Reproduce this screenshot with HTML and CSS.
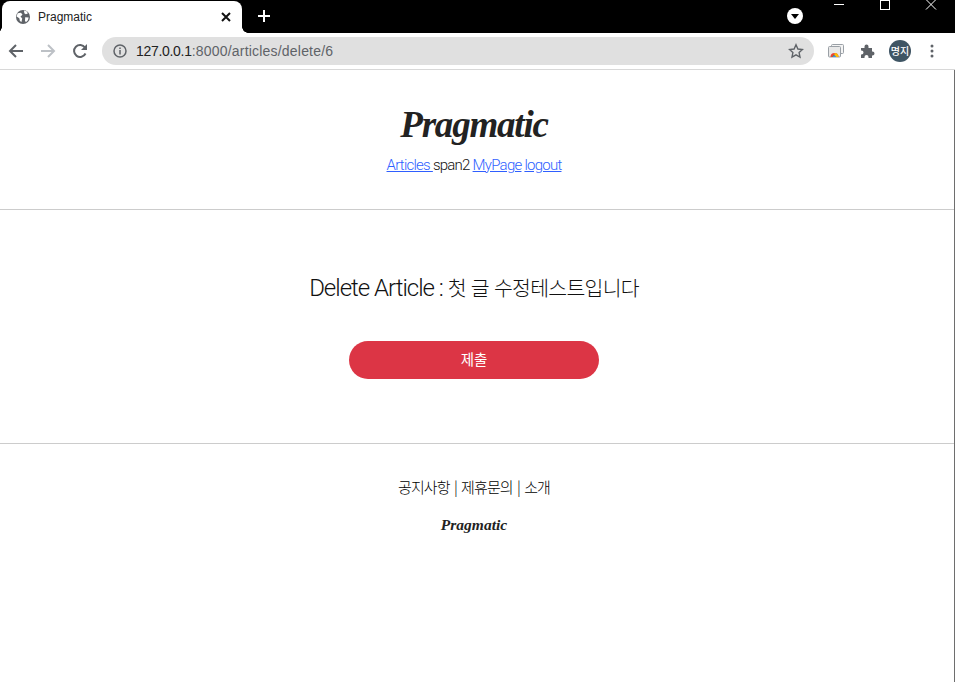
FILE: index.html
```html
<!DOCTYPE html>
<html lang="ko">
<head>
  <meta charset="UTF-8">
  <title>Pragmatic</title>
  <link rel="stylesheet" href="styles.css">
</head>
<body>
  <div class="tabstrip">
    <div class="tab">
      <svg class="globe" width="16" height="16" viewBox="0 0 16 16"><circle cx="8" cy="8" r="7" fill="#5f6368"/><path d="M2.600 4.200L6 3.800l1.500 2L5.500 7.600l1.700 2-.7 3.400-1.600-1-.6-2.700L1.600 7.500zM9 1.600l3 1 .8 1.800-2 .8L9.300 4.300zM10.200 8.200l3.500.3-.8 2.800-2 2-.9-1.500z" fill="#fff"/></svg>
      <span class="tab-title">Pragmatic</span>
      <svg class="tab-close" width="10" height="10" viewBox="0 0 10 10"><path d="M1 1l8 8M9 1l-8 8" stroke="#111" stroke-width="2"/></svg>
    </div>
    <svg class="new-tab" width="14" height="14" viewBox="0 0 14 14"><path d="M7 1v12M1 7h12" stroke="#fff" stroke-width="2"/></svg>
    <div class="strip-right">
      <div class="profile-dot"><svg width="10" height="7" viewBox="0 0 10 7"><path d="M1 1h8L5 6z" fill="#000"/></svg></div>
      <div class="win-btns">
        <svg width="12" height="12" viewBox="0 0 12 12"><path d="M1 5.500h10" stroke="#fff"/></svg>
        <svg width="12" height="12" viewBox="0 0 12 12"><rect x="1.500" y="1.500" width="9" height="9" fill="none" stroke="#fff"/></svg>
        <svg width="12" height="12" viewBox="0 0 12 12"><path d="M1 .5l10 10M11 .5l-10 10" stroke="#fff"/></svg>
      </div>
    </div>
  </div>

  <div class="toolbar">
    <svg class="nav" width="16" height="16" viewBox="0 0 16 16"><path d="M15 8H2M8 2L2 8l6 6" fill="none" stroke="#5f6368" stroke-width="2"/></svg>
    <svg class="nav" width="16" height="16" viewBox="0 0 16 16"><path d="M1 8h13M8 2l6 6-6 6" fill="none" stroke="#bdc1c6" stroke-width="2"/></svg>
    <svg class="nav" width="16" height="16" viewBox="0 0 16 16"><path d="M13.500 10.500A6 6 0 1 1 13 4.500" fill="none" stroke="#5f6368" stroke-width="2"/><path d="M15 1v6H9z" fill="#5f6368"/></svg>
    <div class="omnibox">
      <svg width="14" height="14" viewBox="0 0 14 14"><circle cx="7" cy="7" r="6" fill="none" stroke="#5f6368" stroke-width="1.500"/><path d="M7 6v4.500M7 3.500v1.500" stroke="#5f6368" stroke-width="1.500"/></svg>
      <span class="url"><span class="host">127.0.0.1</span>:8000/articles/delete/6</span>
      <svg class="star" width="16" height="16" viewBox="0 0 16 16"><path d="M8 1.800l1.900 4.200 4.600.5-3.400 3.100.9 4.500-4-2.300-4 2.300.9-4.500L1.500 6.500l4.600-.5z" fill="none" stroke="#5f6368" stroke-width="1.400"/></svg>
    </div>
    <div class="tools">
      <svg width="16" height="14" viewBox="0 0 16 14"><rect x="3.500" y=".5" width="12" height="9" rx="1" fill="#f4f4f4" stroke="#9aa0a6"/><rect x=".5" y="2.500" width="12" height="10.500" rx="1" fill="#e8e8e8" stroke="#9aa0a6"/><path d="M2.500 13a4 4 0 0 1 8 0z" fill="#ea4335"/><path d="M6.500 13V9a4 4 0 0 1 4 4z" fill="#fbbc05"/><path d="M4.500 13a2 2 0 0 1 2-2l1 2z" fill="#34a853"/><path d="M5 13a1.500 1.500 0 0 1 3 0z" fill="#4285f4"/></svg>
      <svg width="16" height="16" viewBox="0 0 16 16"><path d="M1 5h3.500V3.500a2 2 0 0 1 4 0V5H12v3.500h.5a2 2 0 0 1 0 4H12V15H8.500v-1a2 2 0 0 0-4 0v1H1v-3.500h.5a2 2 0 0 0 0-4H1z" fill="#5f6368"/></svg>
      <div class="avatar">명지</div>
      <svg width="4" height="14" viewBox="0 0 4 14"><g fill="#5f6368"><circle cx="2" cy="2" r="1.500"/><circle cx="2" cy="7" r="1.500"/><circle cx="2" cy="12" r="1.500"/></g></svg>
    </div>
  </div>

  <div class="page">
    <header class="site-header">
      <h1 class="logo">Pragmatic</h1>
      <div class="site-nav">
        <a href="#">Articles </a><span>span2</span> <a href="#">MyPage</a> <a href="#">logout</a>
      </div>
    </header>
    <hr class="rule">
    <main class="delete-box">
      <h4 class="delete-title">Delete Article : <span class="ko">첫 글 수정테스트입니다</span></h4>
      <button class="submit-btn">제출</button>
    </main>
    <hr class="rule">
    <footer class="site-footer">
      <div class="footer-links">공지사항 | 제휴문의 | 소개</div>
      <div class="footer-logo">Pragmatic</div>
    </footer>
  </div>
</body>
</html>
```

FILE: styles.css
```css
html, body {
  margin: 0;
  height: 100%;
  overflow: hidden;
}

body {
  font-family: "Liberation Sans", "Noto Sans CJK KR", sans-serif;
  background-color: #fff;
  color: #222;
}

.tabstrip {
  height: 33px;
  background-color: #000;
  display: flex;
  align-items: flex-end;
}

.tab {
  position: relative;
  width: 240px;
  height: 32px;
  margin-left: 2px;
  padding: 0 11px 0 13px;
  box-sizing: border-box;
  background-color: #fff;
  border-radius: 8px 8px 0 0;
  display: flex;
  align-items: center;
  gap: 7px;
}

/* the little flares at the foot of the tab */
.tab::before,
.tab::after {
  content: "";
  position: absolute;
  bottom: 0;
  width: 6px;
  height: 6px;
}

.tab::before {
  left: -6px;
  background: radial-gradient(circle at 0 0, #000 5.500px, #fff 6px);
}

.tab::after {
  right: -6px;
  background: radial-gradient(circle at 100% 0, #000 5.500px, #fff 6px);
}

.tab-title {
  font-family: "Liberation Sans", sans-serif;
  font-size: 12px;
  color: #222;
  flex: 1;
}

.new-tab {
  margin: 0 0 10px 15px;
}

.strip-right {
  margin-left: auto;
  align-self: stretch;
  display: flex;
}

.profile-dot {
  width: 16px;
  height: 16px;
  margin: 8px 30px 0 0;
  border-radius: 50%;
  background-color: #fff;
  display: flex;
  align-items: center;
  justify-content: center;
}

.win-btns {
  display: flex;
  gap: 34px;
  padding: 0 18px 0 0;
  margin-top: -1px;
}

.toolbar {
  height: 36px;
  border-bottom: 1px solid #d8d8d8;
  display: flex;
  align-items: center;
  padding: 0 0 0 8px;
  background-color: #fff;
}

.nav {
  margin-right: 16px;
}

.omnibox {
  width: 712px;
  height: 28px;
  margin-left: -2px;
  padding: 0 10px 0 11px;
  box-sizing: border-box;
  border-radius: 14px;
  background-color: #e0e0e0;
  display: flex;
  align-items: center;
  gap: 9px;
}

.url {
  font-family: "Liberation Sans", sans-serif;
  font-size: 14px;
  letter-spacing: .2px;
  color: #5f6368;
  flex: 1;
}

.host {
  color: #222;
  letter-spacing: -.3px;
}

.tools {
  display: flex;
  align-items: center;
  gap: 16px;
  margin-left: 14px;
}

.avatar {
  width: 22px;
  height: 22px;
  margin-left: -3px;
  border-radius: 50%;
  background-color: #3f5564;
  color: #fff;
  font-family: "Noto Sans CJK KR", sans-serif;
  font-size: 10px;
  font-weight: 500;
  line-height: 22px;
  text-align: center;
}

.tools svg:last-child {
  margin-left: 3px;
}

.page {
  text-align: center;
  height: 612px;
  border-right: 1px solid #6e6e6e;
}

.site-header,
.delete-box,
.site-footer {
  padding-right: 6px;
}

.site-header {
  height: 139px;
  box-sizing: border-box;
  padding-top: 32px;
}

.logo {
  margin: 0;
  font-family: "Liberation Serif", serif;
  font-style: italic;
  font-weight: bold;
  font-size: 37px;
  line-height: 46px;
  letter-spacing: -1.200px;
  color: #222;
}

.site-nav {
  margin-top: 8px;
  font-family: "Roboto", sans-serif;
  font-weight: 300;
  font-size: 15px;
  letter-spacing: -.75px;
  color: #111;
}

.site-nav a {
  color: #2f5fff;
}

.rule {
  margin: 0;
  border: 0;
  border-top: 1px solid #ccc;
}

.delete-box {
  height: 233px;
  box-sizing: border-box;
  padding-top: 62px;
}

.delete-title {
  margin: 0 0 38px;
  font-family: "Roboto", sans-serif;
  font-weight: 300;
  font-size: 24px;
  line-height: 30px;
  letter-spacing: -1px;
  color: #111;
}

.delete-title .ko {
  font-family: "Noto Sans CJK KR", sans-serif;
  font-weight: 300;
  font-size: 20.500px;
  letter-spacing: -.75px;
}

.submit-btn {
  width: 250px;
  height: 38px;
  padding: 0 0 4px;
  border: 0;
  border-radius: 19px;
  background-color: #dc3545;
  color: #fff;
  font-family: "Noto Sans CJK KR", sans-serif;
  font-size: 14.500px;
}

.site-footer {
  padding-top: 33px;
}

.footer-links {
  font-family: "Noto Sans CJK KR", sans-serif;
  font-weight: 300;
  font-size: 15px;
  line-height: 20px;
  letter-spacing: -.9px;
  word-spacing: 1px;
  color: #000;
}

.footer-logo {
  margin-top: 18px;
  font-family: "Liberation Serif", serif;
  font-style: italic;
  font-weight: bold;
  font-size: 15.500px;
  line-height: 20px;
}
```
